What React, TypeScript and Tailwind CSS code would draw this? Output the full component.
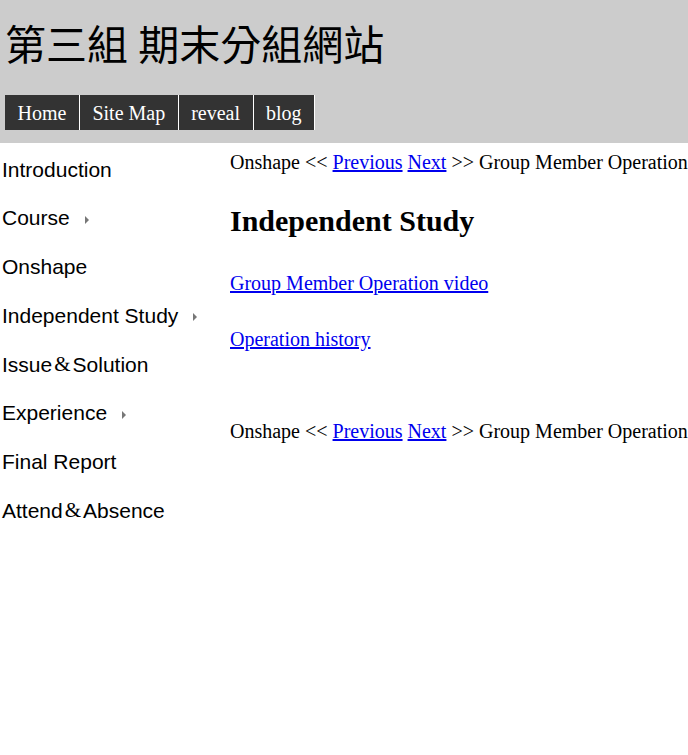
const navItems = ['Home', 'Site Map', 'reveal', 'blog'];

const menu = [
  { label: 'Introduction' },
  { label: 'Course', sub: true },
  { label: 'Onshape' },
  { label: 'Independent Study', sub: true },
  { label: 'Issue', amp: 'Solution' },
  { label: 'Experience', sub: true },
  { label: 'Final Report' },
  { label: 'Attend', amp: 'Absence' },
];

function Breadcrumb() {
  return (
    <p className="whitespace-nowrap leading-[23px]">
      Onshape &lt;&lt; <a href="#" className="text-[#0000ee] underline">Previous</a>{' '}
      <a href="#" className="text-[#0000ee] underline">Next</a> &gt;&gt; Group Member Operation
    </p>
  );
}

export default function App() {
  return (
    <div className="min-h-[755px] bg-white text-black">
      {/* Header */}
      <div className="bg-[#cccccc] pl-[5px] pt-[21px] pb-[13px]">
        <h1 className="text-[41px] leading-[50px] font-normal font-['Liberation_Serif','Noto_Sans_CJK_TC',serif]">
          第三組 期末分組網站
        </h1>
        <div className="mt-[24px] flex font-['Liberation_Serif',serif]">
          {navItems.map((item) => (
            <a
              key={item}
              href="#"
              className="flex h-[35px] items-center border-r border-white bg-[#333333] px-[12.5px] text-[20px] text-white"
            >
              {item}
            </a>
          ))}
        </div>
      </div>

      <div className="flex">
        {/* Sidebar */}
        <ul className="w-[230px] shrink-0 pt-[2px] font-['Liberation_Sans',sans-serif] text-[21px]">
          {menu.map((m) => (
            <li key={m.label} className="flex h-[48.75px] items-center pl-[2px]">
              <span>{m.label}</span>
              {m.amp && (
                <>
                  <span className="mx-[2px] font-['Liberation_Serif',serif]">&amp;</span>
                  <span>{m.amp}</span>
                </>
              )}
              {m.sub && (
                <span className="ml-[15px] mt-[3px] inline-block h-0 w-0 border-y-[4px] border-l-[4px] border-y-transparent border-l-[#777777]" />
              )}
            </li>
          ))}
        </ul>

        {/* Content */}
        <div className="min-w-0 flex-1 pt-[8px] font-['Liberation_Serif',serif] text-[20px]">
          <Breadcrumb />
          <h2 className="mt-[30px] text-[30px] font-bold leading-[34px]">Independent Study</h2>
          <p className="mt-[34px] leading-[23px]">
            <a href="#" className="text-[#0000ee] underline">Group Member Operation video</a>
          </p>
          <p className="mt-[33px] leading-[23px]">
            <a href="#" className="text-[#0000ee] underline">Operation history</a>
          </p>
          <div className="mt-[69px]">
            <Breadcrumb />
          </div>
        </div>
      </div>
    </div>
  );
}
